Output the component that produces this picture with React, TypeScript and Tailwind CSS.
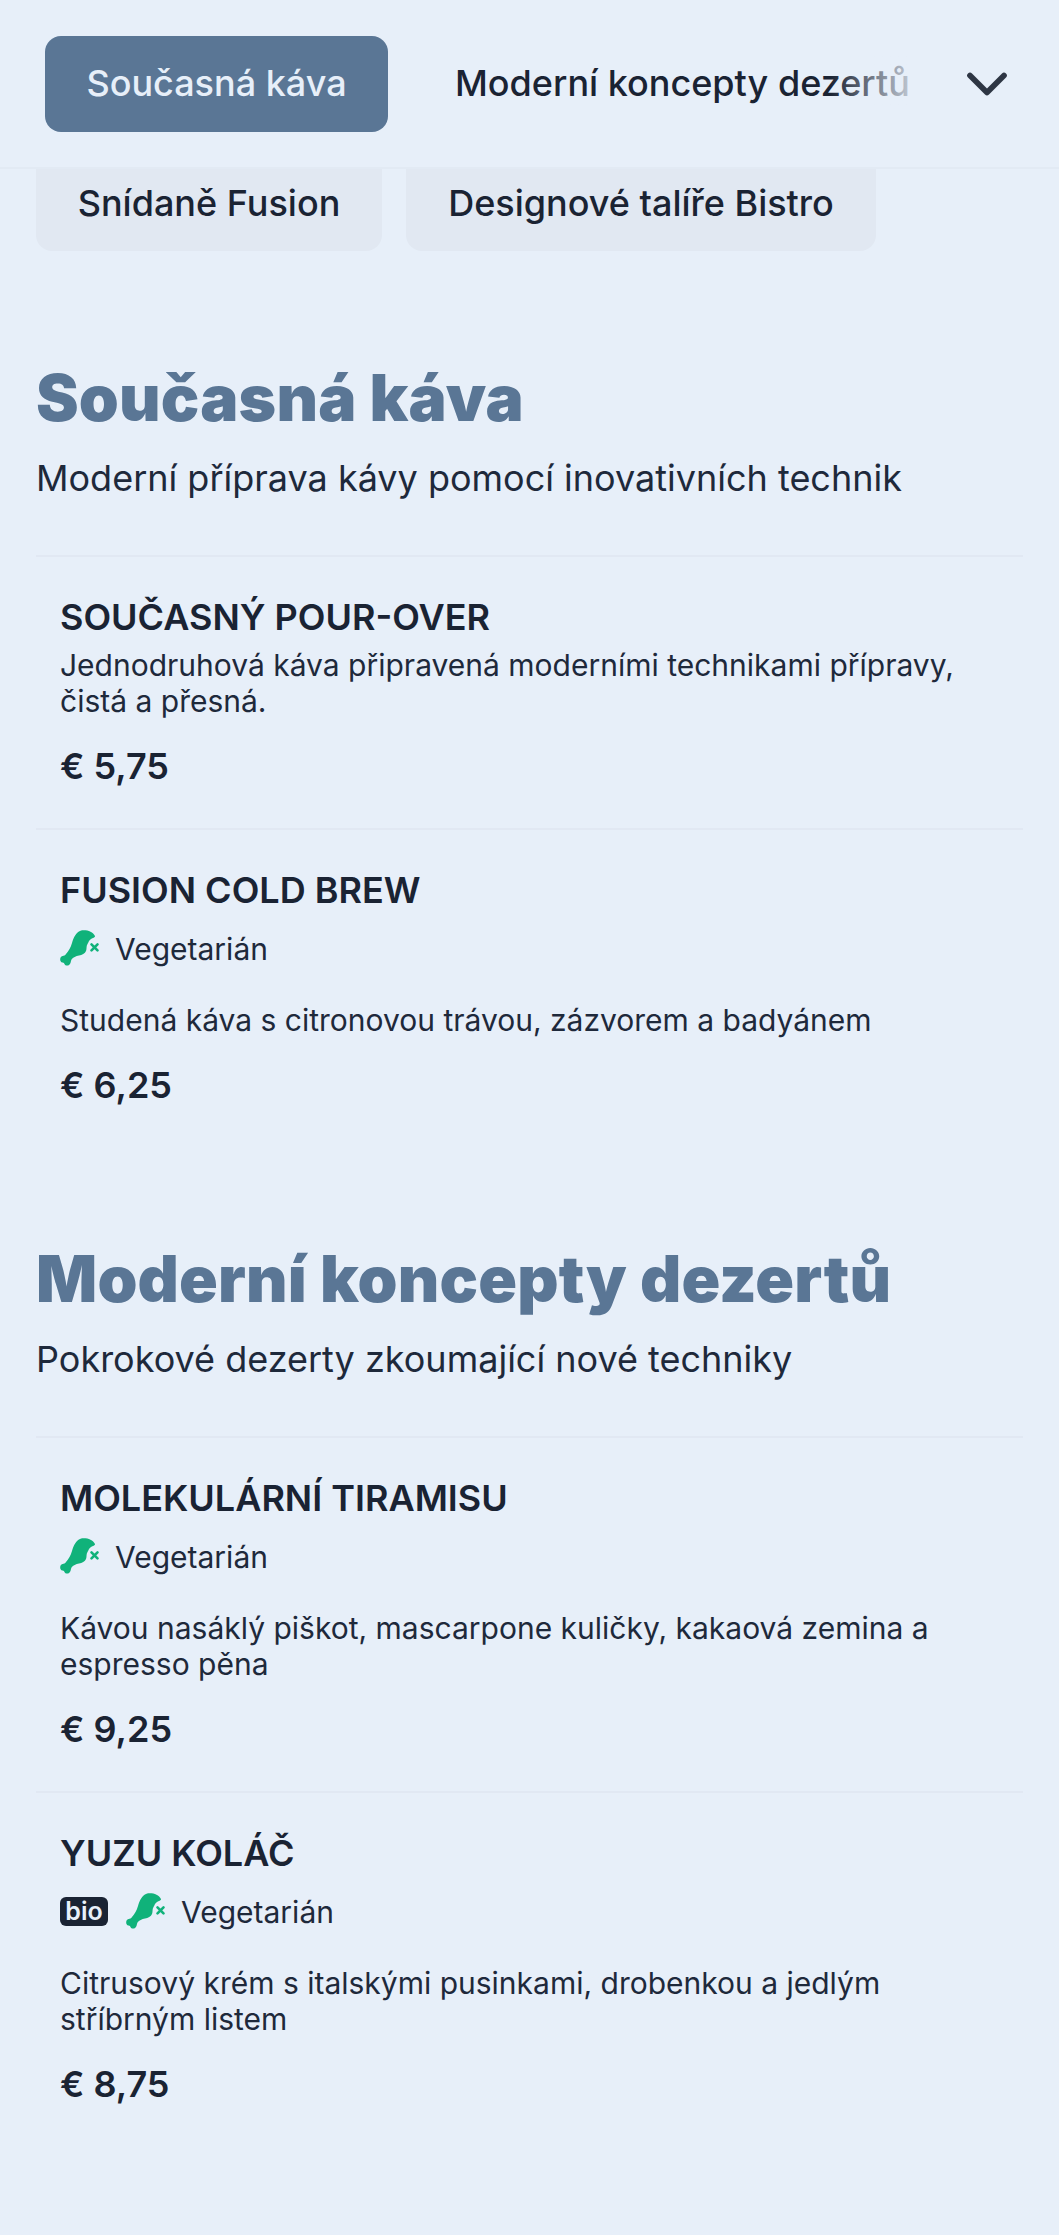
import React from "react";
import { ChevronDown } from "lucide-react";

const inter = "font-['Inter','Liberation_Sans',sans-serif]";

function Drumstick() {
  return (
    <svg viewBox="0 0 40 37" className="w-[40px] h-[37px] shrink-0" aria-hidden="true">
      <path fill="#10b27a" d="M22 .3C27-.3 33 1.500 35 6c.5 1.500-2 2-4 3-2.500 1.500-2 3-3.500 5-1.500 2-.5 5-1.500 7-1 2.500-4 4-7 4.500-3 .5-6 2-7.500 4-.5 1-.5 1.500-1 3.500-1 3-5 3.500-6 1-.5-1.500-1.500-1.500-2.500-1.500-2.500-1-2.500-5.500.5-6.500 1.500-.5 2.500-.5 3.500-2 2.500-3 4.500-6 6-11 1.500-5 4-11.500 10-12.700z" />
      <path d="M31.500 14.300l6 6m0-6l-6 6" stroke="#10b27a" strokeWidth="2.600" strokeLinecap="round" fill="none" />
    </svg>
  );
}

function Tags({ bio }: { bio?: boolean }) {
  return (
    <div className="flex items-center h-[40px] mt-[17px]">
      {bio && (
        <span className="mr-[18px] flex items-center justify-center w-[48px] h-[29px] rounded-[6px] bg-[#1a2333] text-[#e8f0fa] text-[25px] font-semibold leading-none">
          bio
        </span>
      )}
      <Drumstick />
      <span className="ml-[15px] text-[30px] leading-[40px] text-[#1e293b]">Vegetarián</span>
    </div>
  );
}

type Item = { name: string; desc: string[]; price: string; veg?: boolean; bio?: boolean };

function Dish({ item }: { item: Item }) {
  return (
    <div className="border-t-2 border-[#e1e8f3] px-[24px] pt-[37.5px] pb-[38px]">
      <h3 className="text-[36px] leading-[44px] font-semibold text-[#1a2333]">{item.name}</h3>
      {item.veg && <Tags bio={item.bio} />}
      <p className={`${item.veg ? "mt-[33px]" : "mt-[8px]"} text-[30px] leading-[36px] text-[#1e293b]`}>
        {item.desc.map((l, i) => (
          <span key={i} className="block">{l}</span>
        ))}
      </p>
      <div className="mt-[23.5px] text-[36px] leading-[48px] font-semibold text-[#1a2333]">{item.price}</div>
    </div>
  );
}

function Section({ title, sub, items }: { title: string; sub: string; items: Item[] }) {
  return (
    <section>
      <h2 className="pt-[2px] text-[64px] leading-[80px] font-black tracking-[0.2px] text-[#5a7695]">{title}</h2>
      <p className="mt-[16px] text-[36px] leading-[48px] text-[#1e293b]">{sub}</p>
      <div className="mt-[53px]">
        {items.map((it) => (
          <Dish key={it.name} item={it} />
        ))}
      </div>
    </section>
  );
}

export default function App() {
  return (
    <div className={`${inter} w-[1059px] h-[2235px] overflow-hidden bg-[#e7eff9]`}>
      <header className="relative h-[169px] flex items-center border-b-2 border-[#e2eaf4] pl-[45px]">
        <div className="w-[343px] h-[96px] pb-[2px] flex items-center justify-center rounded-[16px] bg-[#5a7695] text-[#e7eff9] text-[36px] font-medium">
          Současná káva
        </div>
        <div className="relative ml-[67px] w-[455px] pb-[2px] overflow-hidden whitespace-nowrap text-[36px] font-medium text-[#1a2333]">
          Moderní koncepty dezertů
          <div className="absolute right-0 top-0 bottom-0 w-[80px] bg-gradient-to-r from-[#e7eff900] to-[#e7eff9cc]" />
        </div>
        <ChevronDown className="ml-[43px] w-[68px] h-[68px] text-[#2e3644]" strokeWidth={2} />
      </header>

      <div className="flex gap-[24px] pl-[36px]">
        <div className="w-[346px] h-[82px] pb-[14px] flex items-center justify-center rounded-b-[16px] bg-[#e1e8f2] text-[36px] font-medium text-[#1a2333]">
          Snídaně Fusion
        </div>
        <div className="w-[470px] h-[82px] pb-[14px] flex items-center justify-center rounded-b-[16px] bg-[#e1e8f2] text-[36px] font-medium text-[#1a2333]">
          Designové talíře Bistro
        </div>
      </div>

      <main className="px-[36px] pt-[105px]">
        <Section
          title="Současná káva"
          sub="Moderní příprava kávy pomocí inovativních technik"
          items={[
            { name: "SOUČASNÝ POUR-OVER", desc: ["Jednodruhová káva připravená moderními technikami přípravy,", "čistá a přesná."], price: "€ 5,75" },
            { name: "FUSION COLD BREW", veg: true, desc: ["Studená káva s citronovou trávou, zázvorem a badyánem"], price: "€ 6,25" },
          ]}
        />
        <div className="h-[90px]" />
        <Section
          title="Moderní koncepty dezertů"
          sub="Pokrokové dezerty zkoumající nové techniky"
          items={[
            { name: "MOLEKULÁRNÍ TIRAMISU", veg: true, desc: ["Kávou nasáklý piškot, mascarpone kuličky, kakaová zemina a", "espresso pěna"], price: "€ 9,25" },
            { name: "YUZU KOLÁČ", veg: true, bio: true, desc: ["Citrusový krém s italskými pusinkami, drobenkou a jedlým", "stříbrným listem"], price: "€ 8,75" },
          ]}
        />
      </main>
    </div>
  );
}
